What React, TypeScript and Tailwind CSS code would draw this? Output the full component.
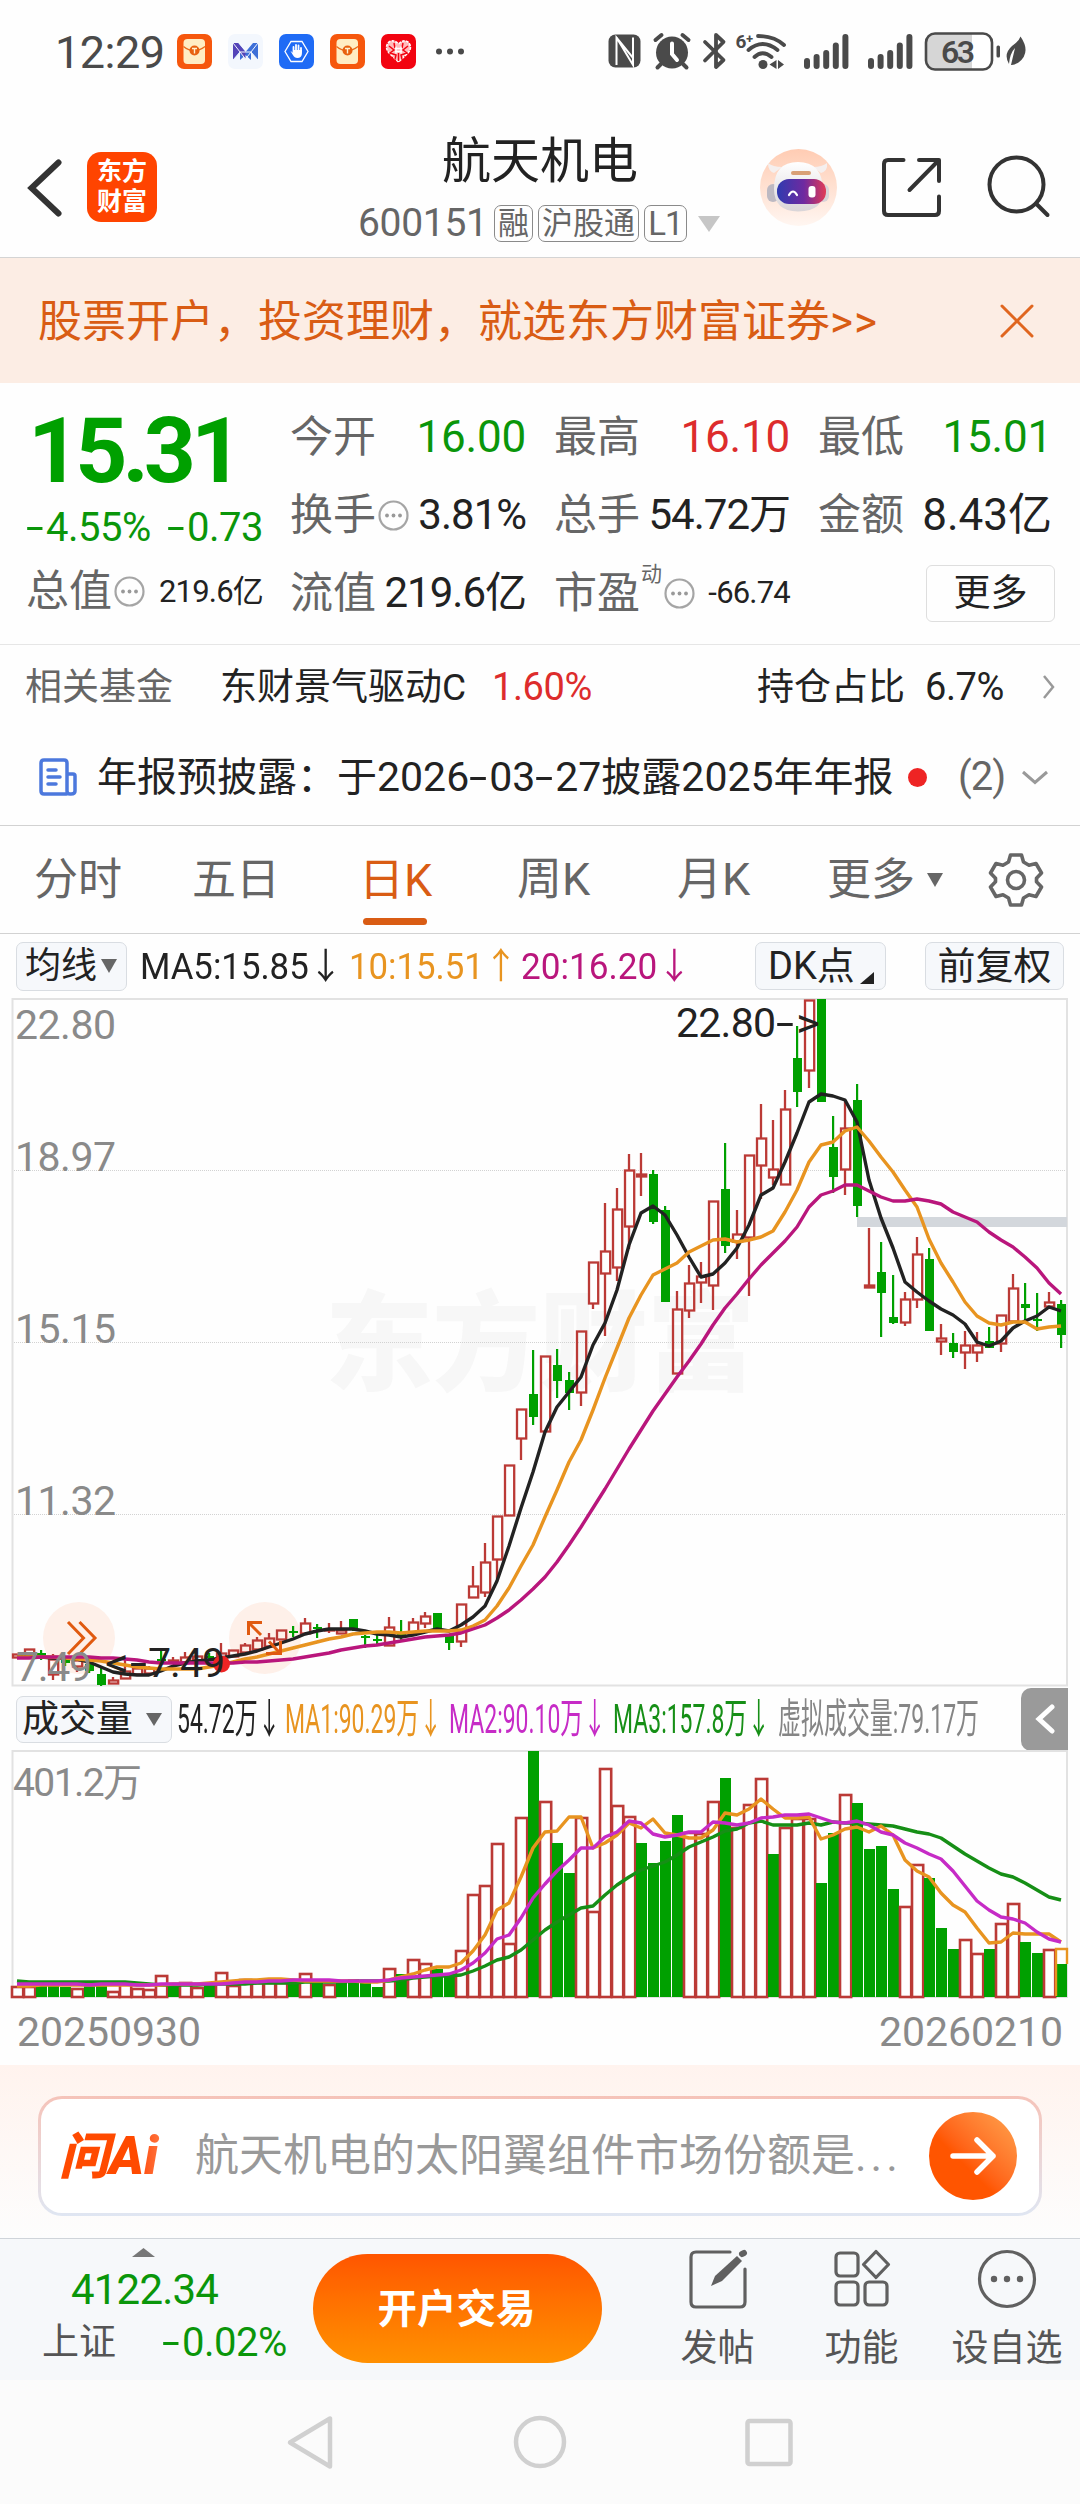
import type { ReactNode } from 'react';

type Kind = 'r' | 'g';
// kind, high, body top, body bottom, low, volume bar top
type Day = [Kind, number, number, number, number, number];

const RED = '#bb3a36';
const GREEN = '#00a000';

const days: Day[] = [
  ['r', 1654, 1654, 1658, 1658, 1986],
  ['r', 1649, 1649, 1657, 1657, 1986],
  ['g', 1650, 1653, 1656, 1660, 1986],
  ['r', 1654, 1659, 1675, 1680, 1986],
  ['g', 1656, 1659, 1663, 1666, 1987],
  ['r', 1658, 1660, 1667, 1672, 1988],
  ['g', 1660, 1664, 1671, 1673, 1986],
  ['g', 1667, 1674, 1685, 1686, 1986],
  ['r', 1677, 1680, 1684, 1684, 1991],
  ['r', 1660, 1671, 1679, 1679, 1982],
  ['r', 1666, 1668, 1675, 1675, 1988],
  ['r', 1666, 1668, 1674, 1674, 1989],
  ['g', 1650, 1659, 1661, 1662, 1975],
  ['r', 1657, 1660, 1663, 1664, 1984],
  ['r', 1652, 1657, 1663, 1663, 1982],
  ['r', 1656, 1656, 1661, 1661, 1987],
  ['g', 1653, 1656, 1658, 1660, 1983],
  ['r', 1643, 1653, 1660, 1660, 1972],
  ['r', 1650, 1650, 1657, 1657, 1985],
  ['r', 1643, 1645, 1653, 1653, 1979],
  ['r', 1637, 1640, 1650, 1650, 1982],
  ['r', 1633, 1638, 1647, 1647, 1982],
  ['r', 1630, 1630, 1640, 1640, 1982],
  ['g', 1626, 1631, 1633, 1637, 1983],
  ['r', 1618, 1623, 1634, 1634, 1973],
  ['g', 1624, 1627, 1629, 1638, 1983],
  ['r', 1623, 1629, 1631, 1633, 1984],
  ['r', 1621, 1630, 1634, 1634, 1982],
  ['g', 1619, 1619, 1629, 1631, 1979],
  ['g', 1635, 1636, 1638, 1648, 1982],
  ['g', 1635, 1639, 1641, 1646, 1987],
  ['r', 1617, 1627, 1646, 1646, 1968],
  ['g', 1620, 1632, 1635, 1640, 1974],
  ['r', 1618, 1622, 1634, 1634, 1959],
  ['r', 1612, 1616, 1624, 1628, 1963],
  ['g', 1613, 1613, 1632, 1632, 1969],
  ['g', 1634, 1636, 1643, 1650, 1975],
  ['r', 1604, 1604, 1642, 1647, 1950],
  ['r', 1566, 1586, 1598, 1598, 1894],
  ['r', 1543, 1562, 1593, 1597, 1885],
  ['r', 1516, 1516, 1560, 1579, 1843],
  ['r', 1465, 1465, 1516, 1516, 1943],
  ['r', 1409, 1409, 1439, 1460, 1817],
  ['g', 1350, 1394, 1417, 1425, 1751],
  ['r', 1356, 1356, 1432, 1432, 1801],
  ['g', 1349, 1365, 1381, 1398, 1843],
  ['g', 1372, 1380, 1393, 1410, 1873],
  ['r', 1331, 1331, 1393, 1406, 1817],
  ['r', 1262, 1262, 1304, 1309, 1911],
  ['r', 1203, 1251, 1274, 1336, 1768],
  ['r', 1188, 1209, 1268, 1281, 1805],
  ['r', 1154, 1170, 1227, 1249, 1816],
  ['r', 1153, 1174, 1177, 1196, 1843],
  ['g', 1170, 1174, 1222, 1224, 1863],
  ['g', 1206, 1210, 1302, 1302, 1841],
  ['r', 1291, 1309, 1374, 1374, 1815],
  ['r', 1265, 1283, 1311, 1318, 1832],
  ['r', 1262, 1276, 1283, 1303, 1833],
  ['r', 1201, 1201, 1286, 1310, 1801],
  ['g', 1143, 1189, 1246, 1253, 1778],
  ['r', 1210, 1234, 1242, 1259, 1827],
  ['r', 1155, 1155, 1238, 1296, 1804],
  ['r', 1104, 1138, 1166, 1199, 1778],
  ['r', 1120, 1169, 1178, 1185, 1854],
  ['r', 1090, 1109, 1185, 1185, 1827],
  ['g', 1026, 1058, 1092, 1107, 1818],
  ['r', 1000, 1000, 1071, 1088, 1818],
  ['g', 999, 999, 1102, 1102, 1883],
  ['g', 1116, 1147, 1177, 1193, 1833],
  ['r', 1100, 1128, 1170, 1195, 1794],
  ['g', 1084, 1100, 1206, 1217, 1803],
  ['r', 1228, 1285, 1288, 1288, 1849],
  ['g', 1242, 1272, 1293, 1337, 1846],
  ['g', 1275, 1317, 1323, 1324, 1889],
  ['r', 1292, 1299, 1323, 1326, 1906],
  ['r', 1237, 1254, 1300, 1308, 1864],
  ['g', 1248, 1259, 1331, 1331, 1878],
  ['r', 1324, 1338, 1342, 1355, 1928],
  ['g', 1333, 1343, 1352, 1358, 1949],
  ['r', 1331, 1345, 1353, 1369, 1939],
  ['r', 1332, 1345, 1353, 1362, 1953],
  ['g', 1327, 1341, 1348, 1348, 1949],
  ['r', 1315, 1315, 1344, 1352, 1923],
  ['r', 1274, 1288, 1322, 1322, 1903],
  ['g', 1283, 1304, 1308, 1322, 1942],
  ['g', 1293, 1319, 1321, 1331, 1953],
  ['r', 1292, 1302, 1307, 1307, 1949],
  ['g', 1300, 1304, 1335, 1348, 1964],
];

// Volume bars are coloured against the previous close, so they get their own list
const volumeKinds = 'rrgggrggrrrrrgrrgrrrrrrgrgrggggrgrrggrrrrrrgrggrrrrrggggrrrgrrrgrrrggrggggrrgggrrgrrggrg';

const ma5 = [
  1657, 1657, 1657, 1658, 1658, 1659, 1662, 1667, 1672, 1674, 1675, 1675, 1671, 1666, 1663, 1661, 1660, 1658, 1656,
  1654, 1651, 1647, 1643, 1639, 1634, 1631, 1629, 1629, 1629, 1631, 1634, 1635, 1637, 1635, 1632, 1629, 1631, 1625,
  1617, 1606, 1581, 1546, 1508, 1472, 1432, 1407, 1392, 1377, 1345, 1323, 1290, 1245, 1213, 1206, 1215, 1235, 1257,
  1277, 1274, 1263, 1248, 1225, 1195, 1188, 1162, 1133, 1102, 1094, 1096, 1100, 1122, 1180, 1218, 1248, 1282, 1292,
  1301, 1309, 1315, 1324, 1342, 1346, 1341, 1328, 1321, 1316, 1307, 1311,
];

const ma10 = [
  1657, 1657, 1657, 1657, 1658, 1659, 1660, 1661, 1663, 1665, 1667, 1668, 1669, 1669, 1669, 1669, 1667, 1665, 1662,
  1659, 1657, 1654, 1651, 1648, 1645, 1642, 1639, 1637, 1634, 1633, 1632, 1632, 1633, 1632, 1631, 1631, 1631, 1630,
  1626, 1620, 1606, 1588, 1566, 1545, 1517, 1490, 1462, 1440, 1410, 1378, 1348, 1318, 1295, 1275, 1269, 1263, 1252,
  1246, 1240, 1239, 1242, 1240, 1237, 1231, 1212, 1190, 1162, 1145, 1142, 1131, 1127, 1141, 1157, 1172, 1190, 1207,
  1239, 1263, 1282, 1302, 1316, 1323, 1325, 1322, 1322, 1329, 1327, 1326,
];

const ma20 = [
  1658, 1658, 1657, 1657, 1657, 1657, 1657, 1658, 1658, 1659, 1660, 1662, 1663, 1663, 1663, 1663, 1663, 1663, 1663,
  1662, 1662, 1661, 1660, 1659, 1657, 1655, 1653, 1650, 1648, 1646, 1645, 1643, 1641, 1639, 1637, 1636, 1635, 1633,
  1629, 1625, 1618, 1610, 1600, 1589, 1577, 1562, 1545, 1527, 1508, 1489, 1469, 1449, 1430, 1411, 1394, 1377, 1361,
  1344, 1325, 1308, 1294, 1279, 1265, 1253, 1241, 1227, 1207, 1195, 1191, 1185, 1185, 1191, 1197, 1201, 1201, 1199,
  1201, 1204, 1212, 1217, 1222, 1232, 1240, 1247, 1257, 1268, 1283, 1294,
];

const vol5 = [
  1986, 1986, 1985, 1985, 1985, 1985, 1985, 1985, 1985, 1985, 1985, 1985, 1985, 1984, 1984, 1984, 1983, 1982, 1981,
  1980, 1980, 1979, 1979, 1980, 1981, 1981, 1981, 1981, 1981, 1982, 1982, 1980, 1977, 1974, 1970, 1967, 1967, 1963,
  1951, 1935, 1910, 1903, 1877, 1848, 1832, 1831, 1817, 1817, 1848, 1843, 1835, 1823, 1828, 1819, 1833, 1835, 1838,
  1838, 1830, 1813, 1815, 1809, 1799, 1809, 1818, 1818, 1817, 1839, 1835, 1829, 1827, 1832, 1826, 1835, 1860, 1871,
  1877, 1893, 1905, 1912, 1928, 1943, 1942, 1933, 1934, 1934, 1934, 1942,
];

const vol10 = [
  1984, 1984, 1984, 1984, 1984, 1984, 1985, 1984, 1984, 1984, 1985, 1985, 1984, 1984, 1984, 1984, 1984, 1984, 1983,
  1982, 1982, 1981, 1981, 1980, 1980, 1980, 1980, 1981, 1981, 1981, 1981, 1980, 1978, 1977, 1976, 1975, 1974, 1970,
  1963, 1953, 1939, 1935, 1918, 1898, 1884, 1871, 1860, 1848, 1848, 1837, 1832, 1821, 1823, 1834, 1837, 1835, 1832,
  1832, 1822, 1823, 1825, 1823, 1818, 1817, 1815, 1815, 1814, 1818, 1822, 1823, 1821, 1825, 1832, 1835, 1843, 1848,
  1854, 1859, 1871, 1886, 1901, 1910, 1917, 1919, 1923, 1932, 1939, 1942,
];

const vol20 = [
  1981, 1982, 1982, 1982, 1982, 1982, 1982, 1982, 1982, 1982, 1983, 1984, 1985, 1985, 1985, 1985, 1984, 1984, 1984,
  1984, 1983, 1983, 1983, 1983, 1982, 1982, 1982, 1982, 1981, 1981, 1981, 1981, 1980, 1978, 1977, 1976, 1976, 1975,
  1971, 1966, 1960, 1957, 1950, 1940, 1930, 1922, 1915, 1908, 1906, 1895, 1885, 1877, 1870, 1866, 1862, 1855, 1847,
  1842, 1837, 1831, 1829, 1823, 1821, 1825, 1825, 1825, 1823, 1825, 1822, 1823, 1823, 1824, 1825, 1826, 1829, 1832,
  1834, 1838, 1846, 1854, 1861, 1868, 1874, 1877, 1883, 1890, 1897, 1900,
];

const xAt = (i: number) => 17 + i * 12;
const toPoints = (values: number[]) => values.map((y, i) => `${xAt(i)},${y}`).join(' ');

function Series({ values, color }: { values: number[]; color: string }) {
  return <polyline points={toPoints(values)} fill="none" stroke={color} strokeWidth={3.4} strokeLinejoin="round" />;
}

// Wide hyphen used for signs and dates
function Hyphen() {
  return <span className="inline-block w-[20px] origin-left scale-x-160">-</span>;
}

function EnvelopeIcon() {
  return (
    <svg width="35" height="35" viewBox="0 0 35 35">
      <rect width="35" height="35" rx="7" fill="#f6570d" />
      <rect x="6.5" y="5" width="21.500" height="25" rx="4" fill="#ffedc4" />
      <path d="M6.500 12.500Q17 21 28 12.500" fill="none" stroke="#e9691b" strokeWidth="1.200" />
      <circle cx="17.500" cy="16.500" r="5" fill="#e8610f" />
      <path d="M15 14.500h5M17.500 14.500v5" stroke="#fff0cf" strokeWidth="1.400" />
    </svg>
  );
}

function StatusBar() {
  return (
    <div className="flex h-[103px] items-start pt-[32px] text-[#4a4a4a]">
      <span className="ml-[55px] w-[122px] text-[45px] leading-[42px] tracking-[-0.5px]">12:29</span>
      <div className="mt-[2px] flex gap-[16px]">
        <EnvelopeIcon />
        <svg width="35" height="35" viewBox="0 0 35 35">
          <rect width="35" height="35" rx="7" fill="#f3f7fd" />
          <path d="M5 9v17l7-8v8l5.500-5 5.500 5v-8l7 8V9l-5 0-7.500 9L10 9z" fill="#3d6fd8" />
          <path d="M5 9v17l6-8 6.500 7V18L10 9z" fill="#5544b8" />
          <path d="M5 9l12.500 16L30 9M5 26l7-8 11 0 7 8" fill="none" stroke="#f3f7fd" strokeWidth="1" />
        </svg>
        <svg width="35" height="35" viewBox="0 0 35 35">
          <rect width="35" height="35" rx="7" fill="#1f6bf5" />
          <path d="M12 7.500h11l6 10-6 10H12l-6-10z" fill="none" stroke="#fff" strokeWidth="1.300" />
          <path
            d="M14.500 18v-5M17 17v-6M19.500 17v-5.500M22 18v-4"
            stroke="#fff"
            strokeWidth="1.800"
            strokeLinecap="round"
          />
          <path d="M11.500 17l3 2v-3h8.400v4q-.5 4-4.500 4-3 0-4.500-3z" fill="#fff" />
        </svg>
        <EnvelopeIcon />
        <svg width="35" height="35" viewBox="0 0 35 35">
          <rect width="35" height="35" rx="7" fill="#f20310" />
          <path
            d="M17.500 28L8 19q-5-6 0-11 5-3 9.500 2 4.500-5 9.500-2 5 5 0 11z"
            fill="#fbb"
            stroke="#fff"
            strokeWidth="1.500"
            strokeDasharray="3 1"
          />
          <path
            d="M8 12l5 4-4 3 6 2-1 4M27 12l-5 4 4 3-6 2 1 4M13 9l1 5M22 9l-1 5M17.500 19v8"
            fill="none"
            stroke="#f20310"
            strokeWidth="1.500"
          />
          <path d="M15 12.500v7M20 12.500v7M14 14.500h7M14 17.500h7" stroke="#fff" strokeWidth="1.300" />
        </svg>
      </div>
      <svg className="mt-[15px] ml-[17px]" width="32" height="8">
        <circle cx="6" cy="4.500" r="3" fill="#4a4a4a" />
        <circle cx="17" cy="4.500" r="3" fill="#4a4a4a" />
        <circle cx="28" cy="4.500" r="3" fill="#4a4a4a" />
      </svg>
      {/* system icons */}
      <svg className="mt-[-12px] ml-[143px]" width="420" height="52" viewBox="608 20 420 52" fill="#4a4a4a">
        <rect x="608.500" y="34.500" width="32" height="33" rx="7" />
        <path
          d="M616.500 65V37.500L633 58V37.500M616.500 37.500L633 65V37.500"
          fill="none"
          stroke="#fff"
          strokeWidth="2"
        />
        <circle cx="672" cy="52.500" r="16" />
        <path
          d="M655.500 40l6-5M688.500 40l-6-5M661 64l-3.500 3.500M683 64l3.500 3.500"
          stroke="#4a4a4a"
          strokeWidth="4"
          strokeLinecap="round"
        />
        <path d="M672 43.500V54l5 6" fill="none" stroke="#fff" strokeWidth="4" strokeLinecap="round" />
        <path
          d="M705 42l18.500 18-7.500 7V35l7.500 7L705 60.500"
          fill="none"
          stroke="#4a4a4a"
          strokeWidth="3.800"
          strokeLinejoin="round"
          strokeLinecap="round"
        />
        <g fill="none" stroke="#4a4a4a" strokeWidth="3.800" strokeLinecap="round">
          <path d="M758 36q16 0 26 9" />
          <path d="M748.500 50q14-12 29 0" />
          <path d="M754.500 57q8-7.500 17 0" />
        </g>
        <circle cx="763" cy="64.500" r="4.500" />
        <path d="M776.500 60v9l-7-4.500zM778 60v9l6-4.500z" />
        <text x="735.500" y="48" fontSize="19" fontWeight="700" textLength="18">
          6⁺
        </text>
        {[804, 868].map((x) => (
          <g key={x}>
            <rect x={x} y="58" width="6" height="11" rx="3" />
            <rect x={x + 9.6} y="54" width="6" height="15" rx="3" />
            <rect x={x + 19.2} y="50" width="6" height="19" rx="3" />
            <rect x={x + 28.8} y="42.500" width="6" height="26.500" rx="3" />
            <rect x={x + 38.4} y="34" width="6" height="35" rx="3" />
          </g>
        ))}
        <rect x="926" y="33.500" width="66" height="36" rx="9" fill="#fff" />
        <path d="M935 34h37v35h-37q-8-1-8-8V42q0-7 8-8z" fill="#d6d6d6" />
        <rect x="926" y="33.500" width="66" height="36" rx="9" fill="none" stroke="#4a4a4a" strokeWidth="2.600" />
        <text x="941" y="63" fontSize="32" fontWeight="600" textLength="34">
          63
        </text>
        <rect x="996.500" y="45.500" width="3.500" height="12" rx="1.500" />
        <path d="M1020.500 36.500q11 16-2 26-5 3-7.500 2.500l4-17q-5 5-6 16-6-10 3-18 7-5 8.500-9.500z" />
      </svg>
    </div>
  );
}

function Tag({ children }: { children: ReactNode }) {
  return (
    <span className="flex h-[37px] shrink-0 items-center rounded-[7px] border border-[#8a8a8a] px-[3px] text-[31px] leading-none whitespace-nowrap">
      {children}
    </span>
  );
}

function Header() {
  return (
    <div className="flex h-[155px] border-b border-[#d4d4d4]">
      <svg className="mt-[56px] ml-[27px]" width="36" height="58" viewBox="0 0 36 58">
        <path d="M31.500 3.500L4.500 29l27 25.500" fill="none" stroke="#333" strokeWidth="6" strokeLinecap="round" />
      </svg>
      <div className="mt-[49px] ml-[24px] grid h-[70px] w-[70px] place-content-center rounded-[14px] bg-[#ff4400] text-[25px] leading-[30px] font-bold text-white">
        <span>东方</span>
        <span>财富</span>
      </div>
      <div className="ml-[201px] w-[362px]">
        <div className="mt-[33px] ml-[84px] text-[49px] leading-[52px] text-[#222]">航天机电</div>
        <div className="mt-[17px] flex h-[37px] items-center text-[#666]">
          <span className="w-[136px] shrink-0 text-[39px] leading-none tracking-[-0.3px]">600151</span>
          <div className="flex gap-[5px]">
            <Tag>融</Tag>
            <Tag>沪股通</Tag>
            <Tag>
              <span className="w-[35px] text-center text-[33px] tracking-[-1px]">L1</span>
            </Tag>
          </div>
          <svg className="ml-[10px] shrink-0" width="24" height="17">
            <path d="M1 1h22L12 17z" fill="#c6c6c6" />
          </svg>
        </div>
      </div>
      {/* assistant avatar */}
      <svg className="mt-[46px] ml-[40px]" width="77" height="77" viewBox="0 0 77 77">
        <defs>
          <linearGradient id="halo" x1="0" y1="0" x2="0" y2="1">
            <stop offset="0" stopColor="#ffccb3" />
            <stop offset="1" stopColor="#fff6f1" />
          </linearGradient>
          <linearGradient id="visor">
            <stop offset="0" stopColor="#2f3bb0" />
            <stop offset="0.55" stopColor="#6f2aa0" />
            <stop offset="1" stopColor="#e23a56" />
          </linearGradient>
          <linearGradient id="shell" x1="0" y1="0" x2="0" y2="1">
            <stop offset="0" stopColor="#ffffff" />
            <stop offset="1" stopColor="#d9d5d8" />
          </linearGradient>
        </defs>
        <circle cx="38.500" cy="38.500" r="38.500" fill="url(#halo)" />
        <path d="M8 14q0 8 6 10l8-6q-9 0-14-4zM67 14q1 8-6 10l-8-6q9 0 14-4z" fill="#f5efee" />
        <rect x="7" y="35" width="12" height="18" rx="6" fill="#bdb9c2" />
        <rect x="57" y="35" width="12" height="18" rx="6" fill="#d8d3d8" />
        <path d="M14 40Q14 13 38 13t25 27q2 22-25 22.500Q14 62 14 40z" fill="url(#shell)" />
        <rect x="31" y="22" width="20" height="4" rx="2" fill="#d9a077" />
        <rect x="17" y="30" width="49" height="25" rx="12" fill="url(#visor)" />
        <path d="M29 46q4-7 8 0" fill="none" stroke="#fff" strokeWidth="2.200" strokeLinecap="round" />
        <rect x="48.500" y="37" width="7" height="11.500" rx="3" fill="#fff" />
      </svg>
      <svg
        className="mt-[53px] ml-[43px]"
        width="62"
        height="62"
        viewBox="0 0 62 62"
        fill="none"
        stroke="#333"
        strokeWidth="4"
        strokeLinecap="round"
        strokeLinejoin="round"
      >
        <path d="M23.500 4H8Q4 4 4 8v47q0 4 4 4h47q4 0 4-4V40.500" />
        <path d="M39 4h20v21M58 5L29.500 34" />
      </svg>
      <svg
        className="mt-[52px] ml-[45px]"
        width="64"
        height="64"
        viewBox="0 0 64 64"
        fill="none"
        stroke="#333"
        strokeWidth="4"
        strokeLinecap="round"
      >
        <circle cx="29.500" cy="29.500" r="27" />
        <path d="M49 48.500l11.500 11.500" />
      </svg>
    </div>
  );
}

function Banner() {
  return (
    <div className="flex h-[125px] items-center bg-[#fcede4] text-[#d95c14]">
      <span className="ml-[38px] w-[962px] pt-[2px] text-[44px] leading-none whitespace-nowrap">
        股票开户，投资理财，就选东方财富证券
        <span className="tracking-[1px]">&gt;&gt;</span>
      </span>
      <svg width="34" height="34" viewBox="0 0 34 34">
        <path d="M2 2l30 30M32 2L2 32" stroke="#e0661f" strokeWidth="3" strokeLinecap="round" />
      </svg>
    </div>
  );
}

function InfoDot() {
  return (
    <svg width="31" height="31" viewBox="0 0 31 31" className="shrink-0">
      <circle cx="15.500" cy="15.500" r="14" fill="none" stroke="#a5a5a5" strokeWidth="2.200" />
      <circle cx="9" cy="15.500" r="1.900" fill="#999" />
      <circle cx="15.500" cy="15.500" r="1.900" fill="#999" />
      <circle cx="22" cy="15.500" r="1.900" fill="#999" />
    </svg>
  );
}

function Quote({ label, info, children }: { label: string; info?: boolean; children: ReactNode }) {
  return (
    <div className="flex h-[56px] items-center whitespace-nowrap">
      <span className="text-[43px] leading-none text-[#666]">{label}</span>
      {info && (
        <span className="ml-[2px]">
          <InfoDot />
        </span>
      )}
      <span className="ml-auto leading-none">{children}</span>
    </div>
  );
}

function QuotePanel() {
  return (
    <div className="flex h-[262px] border-b border-[#e6e6e6]">
      <div className="ml-[26px] w-[237px]">
        <div className="mt-[28px] ml-[2px] text-[91px] leading-[80px] font-bold tracking-[-5px] text-[#00a000]">
          15.31
        </div>
        <div className="mt-[13px] flex h-[48px] items-center justify-between text-[40px] tracking-[-0.5px] text-[#0a960a]">
          <span>
            <Hyphen />
            4.55%
          </span>
          <span>
            <Hyphen />
            0.73
          </span>
        </div>
        <div className="mt-[11px]">
          <Quote label="总值" info>
            <span className="text-[31px] tracking-[-0.8px] text-[#222]">219.6亿</span>
          </Quote>
        </div>
      </div>
      <div className="mt-[26px] ml-[27px] grid h-[230px] w-[762px] grid-cols-[236px_236px_234px] content-start gap-x-[28px] gap-y-[22px]">
        <Quote label="今开">
          <span className="text-[44px] tracking-[-0.2px] text-[#0a960a]">16.00</span>
        </Quote>
        <Quote label="最高">
          <span className="text-[44px] tracking-[-0.2px] text-[#dd2c2c]">16.10</span>
        </Quote>
        <Quote label="最低">
          <span className="text-[44px] tracking-[-0.2px] text-[#0a960a]">15.01</span>
        </Quote>
        <Quote label="换手" info>
          <span className="text-[42px] tracking-[-1px] text-[#222]">3.81%</span>
        </Quote>
        <Quote label="总手">
          <span className="text-[42px] tracking-[-1px] text-[#222]">54.72万</span>
        </Quote>
        <Quote label="金额">
          <span className="text-[44px] text-[#222]">8.43亿</span>
        </Quote>
        <Quote label="流值">
          <span className="text-[42px] tracking-[-1px] text-[#222]">219.6亿</span>
        </Quote>
        <div className="flex h-[56px] items-center whitespace-nowrap">
          <span className="text-[43px] leading-none text-[#666]">市盈</span>
          <span className="mb-[38px] ml-[1px] text-[21px] leading-none text-[#666]">动</span>
          <span className="ml-[2px]">
            <InfoDot />
          </span>
          <span className="ml-auto text-[31px] tracking-[-0.8px] text-[#222]">-66.74</span>
        </div>
        <div className="mr-[-3px] ml-auto flex h-[57px] w-[129px] items-center justify-center rounded-[6px] border border-[#dedede] text-[37px] leading-none text-[#222]">
          更多
        </div>
      </div>
    </div>
  );
}

function FundRow() {
  return (
    <div className="flex h-[84px] items-center text-[37px] leading-none text-[#222]">
      <span className="ml-[25px] w-[195px] text-[#666]">相关基金</span>
      <span className="w-[272px]">东财景气驱动C</span>
      <span className="w-[265px] text-[38px] tracking-[-0.4px] text-[#dd2c2c]">1.60%</span>
      <span className="w-[168px]">持仓占比</span>
      <span className="w-[117px] text-[38px] tracking-[-0.4px]">6.7%</span>
      <svg width="13" height="26" fill="none" stroke="#999" strokeWidth="2.500">
        <path d="M2 2l9 11-9 11" />
      </svg>
    </div>
  );
}

function NoticeRow() {
  return (
    <div className="flex h-[97px] items-center border-b border-[#d2d2d2] text-[40px] leading-none text-[#222]">
      <svg
        className="ml-[39px] shrink-0"
        width="38"
        height="38"
        viewBox="0 0 38 38"
        fill="none"
        stroke="#4c78dd"
        strokeWidth="3.500"
        strokeLinejoin="round"
        strokeLinecap="round"
      >
        <path d="M27.500 36H5Q2 36 2 33V5Q2 2 5 2h20q3 0 3 3v28q0 3 3 3h1q4 0 4-3V18q0-2-2-2h-6" />
        <path d="M9 12h8M9 19h12M9 26h8" />
      </svg>
      <span className="ml-[20px] w-[811px] whitespace-nowrap">
        年报预披露：于
        <span className="text-[41px]">
          2026
          <Hyphen />
          03
          <Hyphen />
          27
        </span>
        披露<span className="text-[41px]">2025</span>年年报
      </span>
      <span className="h-[19px] w-[19px] rounded-full bg-[#ee2424]" />
      <span className="ml-[31px] w-[63px] tracking-[-1px] text-[#666]">(2)</span>
      <svg width="28" height="15" fill="none" stroke="#999" strokeWidth="3">
        <path d="M2 2l12 10.500L26 2" />
      </svg>
    </div>
  );
}

function Tabs() {
  return (
    <div className="flex h-[108px] items-center border-b border-[#d2d2d2] text-[44px] leading-none whitespace-nowrap text-[#666]">
      <span className="ml-[34px] w-[158px]">分时</span>
      <span className="w-[167px]">五日</span>
      <div className="flex w-[158px] flex-col pt-[24px] text-[#d95c14]">
        <span className="text-[45px]">日K</span>
        <span className="mt-[15px] ml-[4px] h-[7px] w-[64px] rounded-full bg-[#d95c14]" />
      </div>
      <span className="w-[160px] text-[45px]">周K</span>
      <span className="w-[150px] text-[45px]">月K</span>
      <span className="w-[99px]">更多</span>
      <svg width="18" height="14">
        <path d="M1 0h16L9 14z" fill="#666" />
      </svg>
      <svg className="ml-[44px]" width="56" height="56" viewBox="0 0 56 56" fill="none" stroke="#666" strokeWidth="3.600">
        <path
          d="M22.500 3h11l2 7 5.500 3.200 7-1.700 5.500 9.500-5 5.200v3.600l5 5.200-5.500 9.500-7-1.700-5.500 3.200-2 7h-11l-2-7-5.500-3.200-7 1.700-5.500-9.500 5-5.200v-3.600l-5-5.200L8 11.500l7 1.700 5.500-3.200z"
          strokeLinejoin="round"
        />
        <circle cx="28" cy="28" r="8.500" />
      </svg>
    </div>
  );
}

function PriceHeader() {
  return (
    <div className="flex h-[64px] items-center text-[37px] leading-none whitespace-nowrap text-[#222]">
      <div className="ml-[16px] flex h-[49px] w-[111px] items-center rounded-[7px] border border-[#d9dde2] bg-[#f6f8fb] pl-[8px] text-[36px]">
        均线
        <svg className="ml-[3px]" width="17" height="14">
          <path d="M1 0h16L9 14z" fill="#666" />
        </svg>
      </div>
      <div className="ml-[13px] w-[209px]">
        <span className="inline-block origin-left scale-x-[0.940]">
          MA5:15.85<span className="inline-block w-[27px] text-[36px] tracking-[-10px]">↓</span>
        </span>
      </div>
      <div className="w-[172px] text-[#e89420]">
        <span className="inline-block origin-left scale-x-[0.940]">
          10:15.51<span className="inline-block w-[27px] text-[36px] tracking-[-10px]">↑</span>
        </span>
      </div>
      <div className="w-[234px] text-[#b9167c]">
        <span className="inline-block origin-left scale-x-[0.950]">
          20:16.20<span className="inline-block w-[27px] text-[36px] tracking-[-10px]">↓</span>
        </span>
      </div>
      <div className="flex h-[48px] w-[131px] items-center rounded-[7px] border border-[#d9dde2] bg-[#f6f8fb] pl-[12px] text-[38px]">
        DK点
        <svg className="mt-[23px] ml-[5px]" width="14" height="12">
          <path d="M14 0v12H0z" fill="#222" />
        </svg>
      </div>
      <div className="ml-[39px] flex h-[48px] w-[139px] items-center justify-center rounded-[7px] border border-[#d9dde2] bg-[#f6f8fb] text-[38px]">
        前复权
      </div>
    </div>
  );
}

const priceLabels = [
  { text: '22.80', y: 1039 },
  { text: '18.97', y: 1171 },
  { text: '15.15', y: 1343 },
  { text: '11.32', y: 1515 },
];

function PriceChart() {
  return (
    <svg className="block" width="1080" height="690" viewBox="0 998 1080 690">
      {/* watermark */}
      <text
        x="325"
        y="1382"
        fontSize="108"
        fontWeight="900"
        textLength="430"
        fill="#f7f7f7"
        className="font-['Noto_Sans_CJK_SC',sans-serif]"
      >
        东方财富
      </text>
      {[1170.5, 1342.5, 1514.5].map((y) => (
        <line key={y} x1="12" x2="1067" y1={y} y2={y} stroke="#d2d2d2" strokeDasharray="1 1" />
      ))}
      <rect x="12.500" y="999" width="1054.500" height="686.500" fill="none" stroke="#e2e2e2" strokeWidth="2" />
      <rect x="857" y="1217" width="210" height="10" fill="#d3d7dc" />
      <circle cx="79" cy="1638" r="36" fill="#fef0e9" />
      <circle cx="265" cy="1638" r="36" fill="#fef0e9" />

      {days.map(([kind, high, top, bottom, low], i) => {
        const x = xAt(i);
        if (kind === 'g') {
          return (
            <g key={i} fill={GREEN}>
              <rect x={x - 1} y={high} width="2.200" height={low - high} />
              <rect x={x - 4} y={top} width="9" height={bottom - top} />
            </g>
          );
        }
        return (
          <g key={i} stroke={RED} strokeWidth="2.300" fill="none">
            <path d={`M${x} ${high}V${top}M${x} ${bottom}V${low}`} />
            <rect x={x - 4} y={top + 0.5} width="9.200" height={Math.max(bottom - top - 1, 1)} />
          </g>
        );
      })}
      <Series values={ma5} color="#222" />
      <Series values={ma10} color="#e89420" />
      <Series values={ma20} color="#b9167c" />

      <g fill="none" stroke="#e05a10" strokeWidth="3">
        <path d="M68 1622l15.500 16L68 1654M79.500 1622l15.500 16-15.500 16" />
        <path d="M262 1622.500h-13.500v12.500M249 1623l12 12M266 1653.500h14.500V1641M280 1653l-11-11.500" />
      </g>
      <circle cx="221.500" cy="1664" r="8.500" fill="#ee2424" />

      <g fontSize="41" fill="#8a8a8a">
        {priceLabels.map(({ text, y }) => (
          <text key={text} x="15" y={y} textLength="101">
            {text}
          </text>
        ))}
        <text x="16" y="1681" textLength="76">
          7.49
        </text>
      </g>
      <g fontSize="41" fill="#222">
        <text x="676" y="1037" textLength="100">
          22.80
        </text>
        <text x="776" y="1037" textLength="18" lengthAdjust="spacingAndGlyphs">
          -
        </text>
        <text x="796" y="1037" textLength="24" lengthAdjust="spacingAndGlyphs">
          {'>'}
        </text>
        <text x="105" y="1677" textLength="24" lengthAdjust="spacingAndGlyphs">
          {'<'}
        </text>
        <text x="130" y="1677" textLength="17" lengthAdjust="spacingAndGlyphs">
          -
        </text>
        <text x="148" y="1677" textLength="77">
          7.49
        </text>
      </g>
    </svg>
  );
}

function VolumeLabel({ children, arrow }: { children: ReactNode; arrow?: boolean }) {
  return (
    <span className="inline-block origin-left scale-x-[0.560]">
      {children}
      {arrow && '↓'}
    </span>
  );
}

function VolumeHeader() {
  return (
    <div className="flex h-[62px] items-center text-[41px] leading-none whitespace-nowrap text-[#222]">
      <div className="ml-[16px] flex h-[47px] w-[156px] shrink-0 items-center rounded-[7px] border border-[#d9dde2] bg-[#f6f8fb] pl-[5px] text-[37px]">
        成交量
        <svg className="ml-[13px]" width="16" height="13">
          <path d="M0 0h16L8 13z" fill="#666" />
        </svg>
      </div>
      <div className="ml-[5px] w-[108px] shrink-0">
        <VolumeLabel arrow>54.72万</VolumeLabel>
      </div>
      <div className="w-[164px] shrink-0 text-[#e89420]">
        <VolumeLabel arrow>MA1:90.29万</VolumeLabel>
      </div>
      <div className="w-[164px] shrink-0 text-[#c62bc6]">
        <VolumeLabel arrow>MA2:90.10万</VolumeLabel>
      </div>
      <div className="w-[165px] shrink-0 text-[#168f16]">
        <VolumeLabel arrow>MA3:157.8万</VolumeLabel>
      </div>
      <div className="w-[243px] shrink-0 text-[#858585]">
        <VolumeLabel>虚拟成交量:79.17万</VolumeLabel>
      </div>
      <div className="grid h-[63px] w-[47px] shrink-0 place-content-center rounded-l-[10px] bg-[#9a9a9a]">
        <svg width="20" height="30" fill="none" stroke="#fff" strokeWidth="5" strokeLinecap="round">
          <path d="M17 3L4 15l13 12" />
        </svg>
      </div>
    </div>
  );
}

function VolumeChart() {
  return (
    <svg className="block" width="1080" height="315" viewBox="0 1750 1080 315">
      <rect x="12.500" y="1751" width="1054.500" height="246" fill="none" stroke="#e2e2e2" strokeWidth="2" />
      {days.map((day, i) => {
        const top = day[5];
        const x = xAt(i);
        return volumeKinds[i] === 'g' ? (
          <rect key={i} x={x - 5} y={top} width="11" height={1997 - top} fill={GREEN} />
        ) : (
          <rect
            key={i}
            x={x - 5}
            y={top + 1}
            width="11.200"
            height={Math.max(1996 - top, 1)}
            fill="#fff"
            stroke={RED}
            strokeWidth="2.600"
          />
        );
      })}
      {/* projected volume of the running day */}
      <path d="M1056 1996V1949h11v15" fill="none" stroke="#e89420" strokeWidth="2.400" />
      <Series values={vol20} color="#168f16" />
      <Series values={vol5} color="#e89420" />
      <Series values={vol10} color="#c62bc6" />
      <g fill="#8a8a8a">
        <text x="13" y="1796" fontSize="39" textLength="129">
          401.2万
        </text>
        <text x="17" y="2046" fontSize="41" textLength="184">
          20250930
        </text>
        <text x="879" y="2046" fontSize="41" textLength="184">
          20260210
        </text>
      </g>
    </svg>
  );
}

function AskBar() {
  return (
    <div className="h-[174px] border-b border-[#cfd4da] bg-linear-to-b from-[#fff3ee] to-[#fdfdfd] px-[38px] pt-[31px]">
      <div className="h-[120px] rounded-[24px] bg-linear-to-b from-[#f5c3b9] to-[#dfe6f2] p-[3px]">
        <div className="flex h-full items-center rounded-[21px] bg-white">
          <span className="ml-[18px] w-[136px] bg-linear-to-r from-[#ff4a00] from-60% to-[#ff9860] to-90% bg-clip-text text-[50px] leading-[56px] font-black whitespace-nowrap text-transparent italic">
            问<span className="text-[53px]">Ai</span>
          </span>
          <span className="w-[734px] text-[44px] leading-none whitespace-nowrap text-[#999]">
            航天机电的太阳翼组件市场份额是
            <span className="tracking-[4px]">...</span>
          </span>
          <div className="grid h-[88px] w-[88px] place-content-center rounded-full bg-linear-to-bl from-[#ff9240] from-15% to-[#ff5500] to-60%">
            <svg
              width="46"
              height="40"
              fill="none"
              stroke="#fff"
              strokeWidth="5.500"
              strokeLinecap="round"
              strokeLinejoin="round"
            >
              <path d="M3 20h40M27 4l16 16-16 16" />
            </svg>
          </div>
        </div>
      </div>
    </div>
  );
}

function BottomBar() {
  return (
    <div className="flex h-[141px] bg-[#f6f8fa] whitespace-nowrap text-[#555]">
      <div className="w-[313px] text-[#0a960a]">
        <svg className="mt-[9px] ml-[132px]" width="23" height="9">
          <path d="M0 9L11.500 0 23 9z" fill="#777" />
        </svg>
        <div className="mt-[9px] ml-[71px] text-[42px] leading-[48px] tracking-[-0.8px]">4122.34</div>
        <div className="mt-[5px] flex h-[48px] items-center">
          <span className="ml-[42px] w-[120px] text-[37px] text-[#555]">上证</span>
          <span className="text-[40px] tracking-[-0.5px]">
            <Hyphen />
            0.02%
          </span>
        </div>
      </div>
      <div className="mt-[15px] grid h-[109px] w-[289px] place-content-center rounded-full bg-linear-to-b from-[#ff5500] to-[#ff9000] pt-[2px] pr-[2px] text-[39.500px] leading-none font-bold text-white">
        开户交易
      </div>
      <div className="ml-[78px] flex w-[75px] flex-col items-center text-[37px]">
        <svg
          className="mt-[10px]"
          width="60"
          height="60"
          viewBox="0 0 60 60"
          fill="none"
          stroke="#606060"
          strokeWidth="3.200"
          strokeLinecap="round"
        >
          <path d="M42 3H8Q3 3 3 8v45q0 5 5 5h44q5 0 5-5V20" />
          <path d="M23 37l4-10 22-20 5 5-20 20z" fill="#606060" stroke="none" />
          <path d="M54 5l2-1" strokeWidth="6" />
        </svg>
        <span className="mt-[11px] leading-[58px]">发帖</span>
      </div>
      <div className="ml-[69px] flex w-[75px] flex-col items-center text-[37px]">
        <svg
          className="mt-[10px]"
          width="60"
          height="60"
          viewBox="0 0 60 60"
          fill="none"
          stroke="#606060"
          strokeWidth="3.200"
          strokeLinejoin="round"
        >
          <rect x="4" y="4" width="22" height="23" rx="4" />
          <rect x="4" y="33" width="22" height="23" rx="4" />
          <rect x="33" y="33" width="22" height="23" rx="4" />
          <path d="M44 2.500L56.500 15.500 44 28.500 31.500 15.500z" />
        </svg>
        <span className="mt-[11px] leading-[58px]">功能</span>
      </div>
      <div className="ml-[52px] flex w-[112px] flex-col items-center text-[37px]">
        <svg className="mt-[10px]" width="60" height="60" viewBox="0 0 60 60" fill="#606060">
          <circle cx="30" cy="30" r="27.500" fill="none" stroke="#606060" strokeWidth="3.200" />
          <circle cx="17" cy="30" r="3.200" />
          <circle cx="30" cy="30" r="3.200" />
          <circle cx="43" cy="30" r="3.200" />
        </svg>
        <span className="mt-[11px] leading-[58px]">设自选</span>
      </div>
    </div>
  );
}

function NavBar() {
  return (
    <div className="flex h-[124px] items-start bg-[#fbfbfb] pt-[34px] pl-[286px]">
      <svg width="50" height="56" fill="none" stroke="#d0d0d0" strokeWidth="4.500" strokeLinejoin="round">
        <path d="M44 4.500v48L4 28.500z" />
      </svg>
      <svg className="ml-[176px]" width="56" height="56" fill="none" stroke="#d0d0d0" strokeWidth="4.500">
        <circle cx="28" cy="28" r="24" />
      </svg>
      <svg className="ml-[175px]" width="52" height="56" fill="none" stroke="#d0d0d0" strokeWidth="4.500">
        <rect x="4.500" y="7" width="43" height="43" rx="2" />
      </svg>
    </div>
  );
}

export default function App() {
  return (
    <div className="flex h-[2504px] w-[1080px] flex-col overflow-hidden bg-[#fefefe] font-['Roboto','Noto_Sans_CJK_SC',sans-serif]">
      <StatusBar />
      <Header />
      <Banner />
      <QuotePanel />
      <FundRow />
      <NoticeRow />
      <Tabs />
      <PriceHeader />
      <PriceChart />
      <VolumeHeader />
      <VolumeChart />
      <AskBar />
      <BottomBar />
      <NavBar />
    </div>
  );
}
